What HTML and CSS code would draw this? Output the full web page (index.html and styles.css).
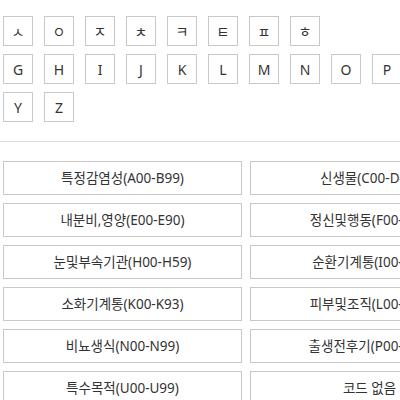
FILE: index.html
```html
<!DOCTYPE html>
<html lang="ko">
<head>
  <meta charset="UTF-8" />
  <meta name="viewport" content="width=device-width, initial-scale=1" />
  <title>질병코드 찾기</title>
  <link rel="stylesheet" href="styles.css">
</head>
<body>
<div class="keys">
  <div class="key-row">
    <a class="key">ㅅ</a>
    <a class="key">ㅇ</a>
    <a class="key">ㅈ</a>
    <a class="key">ㅊ</a>
    <a class="key">ㅋ</a>
    <a class="key">ㅌ</a>
    <a class="key">ㅍ</a>
    <a class="key">ㅎ</a>
  </div>
  <div class="key-row">
    <a class="key">G</a>
    <a class="key">H</a>
    <a class="key">I</a>
    <a class="key">J</a>
    <a class="key">K</a>
    <a class="key">L</a>
    <a class="key">M</a>
    <a class="key">N</a>
    <a class="key">O</a>
    <a class="key">P</a>
    <a class="key">Q</a>
    <a class="key">R</a>
    <a class="key">S</a>
    <a class="key">T</a>
    <a class="key">U</a>
    <a class="key">V</a>
    <a class="key">W</a>
    <a class="key">X</a>
  </div>
  <div class="key-row">
    <a class="key">Y</a>
    <a class="key">Z</a>
  </div>
</div>
<hr class="divider" />
<ul class="codes">
  <li class="code">특정감염성(A00-B99)</li>
  <li class="code">신생물(C00-D48)</li>
  <li class="code">혈액및면역(D50-D89)</li>
  <li class="code">내분비,영양(E00-E90)</li>
  <li class="code">정신및행동(F00-F99)</li>
  <li class="code">신경계통(G00-G99)</li>
  <li class="code">눈및부속기관(H00-H59)</li>
  <li class="code">순환기계통(I00-I99)</li>
  <li class="code">호흡기계통(J00-J99)</li>
  <li class="code">소화기계통(K00-K93)</li>
  <li class="code">피부및조직(L00-L99)</li>
  <li class="code">근골격계통(M00-M99)</li>
  <li class="code">비뇨생식(N00-N99)</li>
  <li class="code">출생전후기(P00-P96)</li>
  <li class="code">선천기형(Q00-Q99)</li>
  <li class="code">특수목적(U00-U99)</li>
  <li class="code">코드 없음</li>
</ul>
</body>
</html>
```

FILE: styles.css
```css
html,
body {
  overflow: hidden;
}
body {
  margin: 0;
  width: 760px;
  font-family: "Noto Sans", "Noto Sans CJK KR", sans-serif;
  color: #333;
  background-color: #fff;
}

.keys {
  display: flex;
  flex-direction: column;
  gap: 8px;
  padding: 16px 3px 0;
}
.key-row {
  display: flex;
  gap: 11px;
}
.key {
  flex: none;
  width: 30px;
  height: 30px;
  box-sizing: border-box;
  border: 1px solid #c8c8c8;
  display: flex;
  align-items: center;
  justify-content: center;
  font-size: 14px;
  color: #333;
  cursor: pointer;
}

.divider {
  margin: 19px 0;
  border: 0;
  border-top: 1px solid #ddd;
}

.codes {
  list-style-type: none;
  margin: 0;
  padding: 0 3px;
  display: grid;
  grid-template-columns: repeat(3, 239px);
  gap: 8px;
}
.code {
  height: 34px;
  box-sizing: border-box;
  border: 1px solid #c8c8c8;
  text-align: center;
  line-height: 32px;
  font-size: 13.5px;
  color: #333;
  cursor: pointer;
}
```
